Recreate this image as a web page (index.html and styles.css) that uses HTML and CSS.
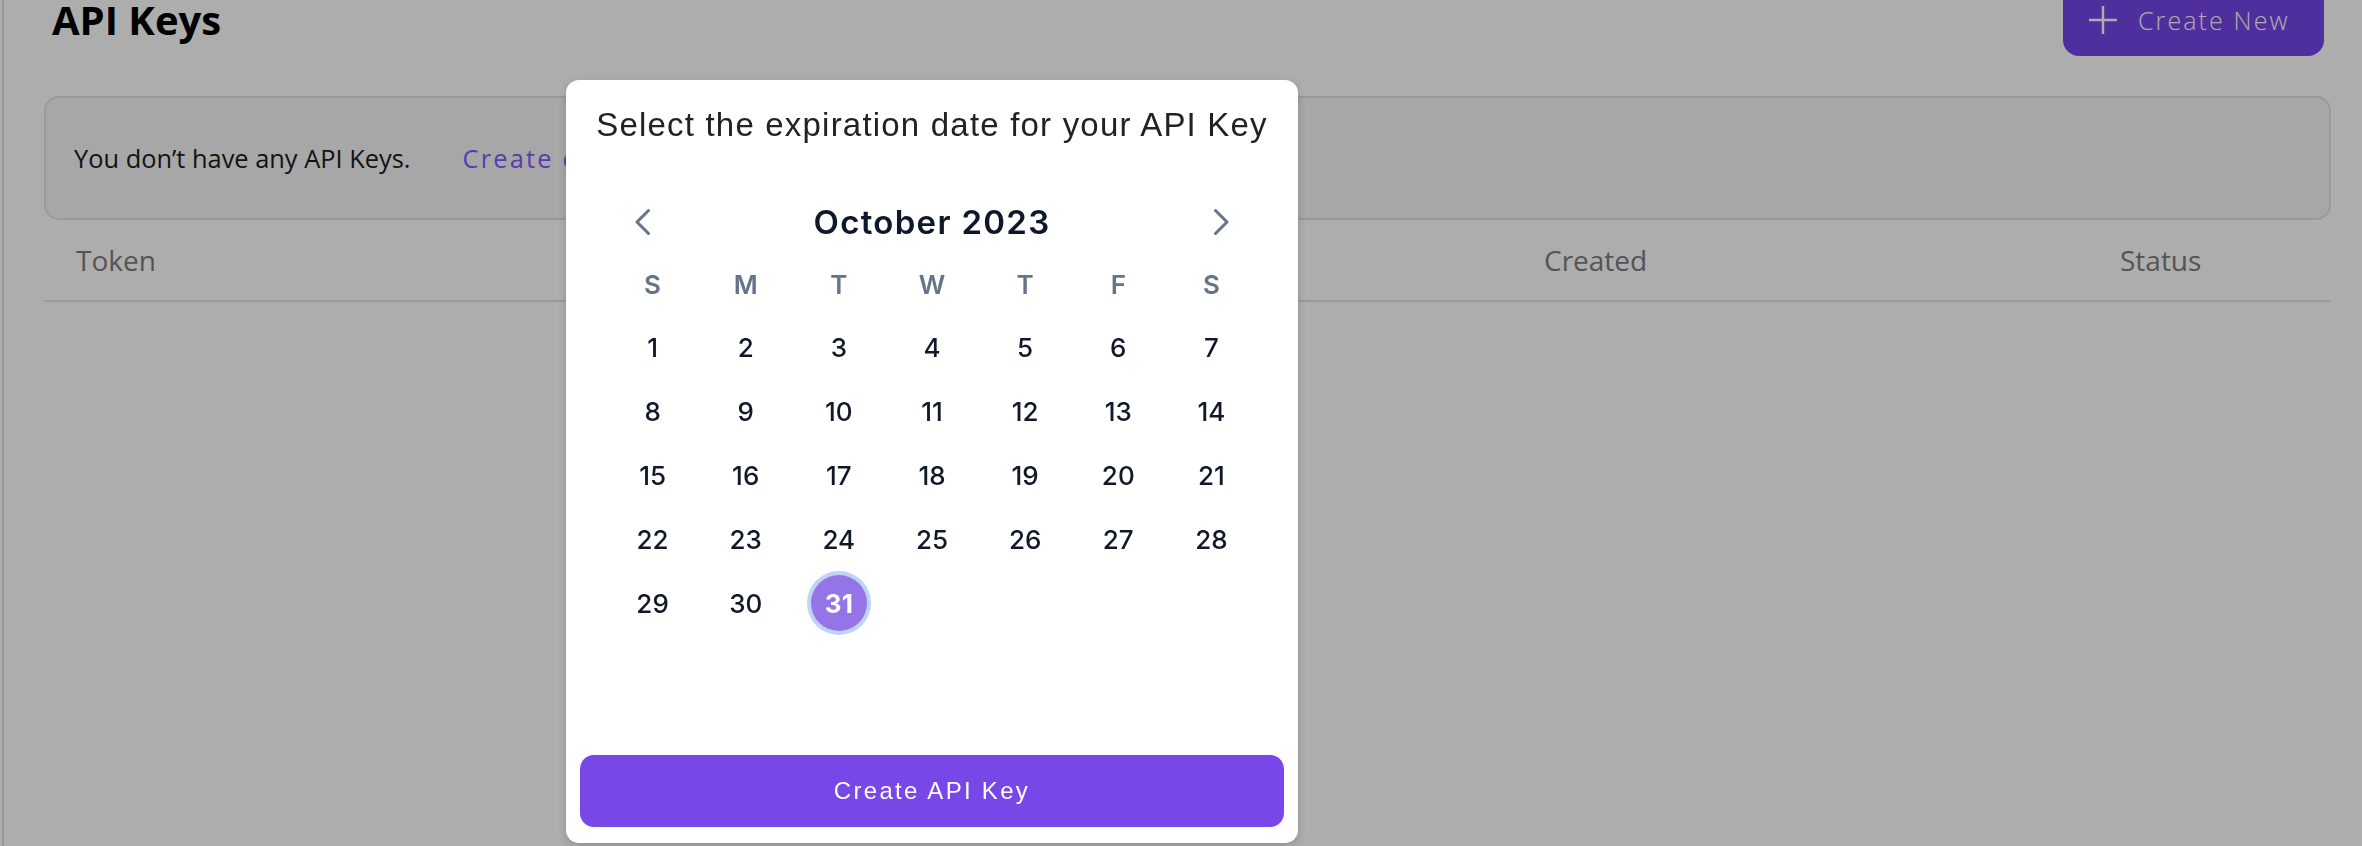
FILE: index.html
```html
<!DOCTYPE html>
<html lang="en">
<head>
<meta charset="utf-8">
<title>API Keys</title>
<link rel="stylesheet" href="styles.css">
</head>
<body>
<div class="app">
  <main class="page">
    <header class="page-header">
      <h1 class="page-title">API Keys</h1>
      <button class="btn-create-new" type="button">
        <svg class="plus-icon" width="30" height="30" viewBox="0 0 30 30" aria-hidden="true">
          <path d="M15 1 V29 M1 15 H29" stroke="currentColor" stroke-width="2.4" fill="none"/>
        </svg>
        <span>Create New</span>
      </button>
    </header>
    <div class="empty-alert">
      <span class="empty-text">You don’t have any API Keys.</span>
      <a class="empty-link" href="#">Create one</a>
    </div>
    <div class="table-head">
      <span>Token</span>
      <span></span>
      <span>Created</span>
      <span>Status</span>
    </div>
  </main>
</div>
<div class="overlay"></div>
<div class="modal" role="dialog" aria-modal="true">
  <h2 class="modal-title">Select the expiration date for your API Key</h2>
  <div class="calendar">
    <div class="cal-header">
      <button class="cal-nav" type="button" aria-label="Previous month">
        <svg width="17" height="28" viewBox="0 0 17 28" aria-hidden="true"><path d="M14.5 2.5 L3 14 L14.5 25.5" stroke="currentColor" stroke-width="3" fill="none" stroke-linecap="round" stroke-linejoin="round"/></svg>
      </button>
      <div class="cal-month">October 2023</div>
      <button class="cal-nav" type="button" aria-label="Next month">
        <svg width="17" height="28" viewBox="0 0 17 28" aria-hidden="true"><path d="M2.5 2.5 L14 14 L2.5 25.5" stroke="currentColor" stroke-width="3" fill="none" stroke-linecap="round" stroke-linejoin="round"/></svg>
      </button>
    </div>
    <div class="cal-weekdays">
      <span>S</span><span>M</span><span>T</span><span>W</span><span>T</span><span>F</span><span>S</span>
    </div>
    <div class="cal-days">
      <span class="cal-day">1</span><span class="cal-day">2</span><span class="cal-day">3</span><span class="cal-day">4</span><span class="cal-day">5</span><span class="cal-day">6</span><span class="cal-day">7</span>
      <span class="cal-day">8</span><span class="cal-day">9</span><span class="cal-day">10</span><span class="cal-day">11</span><span class="cal-day">12</span><span class="cal-day">13</span><span class="cal-day">14</span>
      <span class="cal-day">15</span><span class="cal-day">16</span><span class="cal-day">17</span><span class="cal-day">18</span><span class="cal-day">19</span><span class="cal-day">20</span><span class="cal-day">21</span>
      <span class="cal-day">22</span><span class="cal-day">23</span><span class="cal-day">24</span><span class="cal-day">25</span><span class="cal-day">26</span><span class="cal-day">27</span><span class="cal-day">28</span>
      <span class="cal-day">29</span><span class="cal-day">30</span><span class="cal-day selected">31</span>
    </div>
  </div>
  <button class="btn-primary" type="button">Create API Key</button>
</div>
</body>
</html>
```

FILE: styles.css
```css
html, body {
  margin: 0;
  padding: 0;
}

body {
  width: 2362px;
  height: 846px;
  overflow: hidden;
  background: #ffffff;
  font-family: "Open Sans", "Noto Sans", sans-serif;
}

.app {
  display: flex;
  height: 846px;
}

.page {
  flex: 1;
  margin-left: 2px;
  border-left: 2px solid #e3e3e3;
  padding: 0 31px 0 40px;
}

.page-header {
  display: flex;
  justify-content: space-between;
  align-items: center;
  height: 72px;
  margin-top: -16px;
  padding: 0 7px 0 8px;
}

.page-title {
  margin: 0;
  font-size: 40px;
  line-height: 1;
  font-weight: 700;
  color: #000000;
}

.btn-create-new {
  display: flex;
  align-items: center;
  gap: 20px;
  width: 261px;
  height: 72px;
  padding: 0 0 0 25px;
  border: 0;
  border-radius: 16px;
  background: #7546e8;
  color: #ffffff;
  font-family: "Open Sans", sans-serif;
  font-size: 25px;
  font-weight: 300;
  letter-spacing: 2.1px;
}

.plus-icon {
  flex: none;
}

.empty-alert {
  display: flex;
  align-items: center;
  box-sizing: border-box;
  height: 124px;
  margin-top: 40px;
  padding-left: 28px;
  border: 2px solid #e2e2e2;
  border-radius: 15px;
  background: #f6f6f8;
}

.empty-text {
  font-size: 25.4px;
  color: #1c1c1c;
}

.empty-link {
  margin-left: 52px;
  font-size: 25.4px;
  color: #8658ff;
  letter-spacing: 2.2px;
  text-decoration: none;
}

.table-head {
  display: grid;
  grid-template-columns: 740px 728px 576px 1fr;
  align-items: center;
  height: 80px;
  padding-left: 32px;
  border-bottom: 2px solid #e3e3e3;
  font-size: 28px;
  color: #7d7d7d;
}

.overlay {
  position: fixed;
  inset: 0;
  background: rgba(0, 0, 0, 0.32);
}

.modal {
  position: fixed;
  left: 566px;
  top: 80px;
  width: 732px;
  height: 763px;
  box-sizing: border-box;
  display: flex;
  flex-direction: column;
  padding: 25px 14px 16px;
  background: #ffffff;
  border-radius: 13px;
  box-shadow: 0 3px 10px rgba(0, 0, 0, 0.18);
  font-family: "Liberation Sans", Arial, sans-serif;
}

.modal-title {
  margin: 0;
  text-align: center;
  font-size: 33px;
  line-height: 40px;
  font-weight: 400;
  letter-spacing: 1.2px;
  color: #222222;
}

.calendar {
  margin: 55px 26px 0;
  font-family: Inter, "Noto Sans", sans-serif;
}

.cal-header {
  display: flex;
  align-items: center;
  justify-content: space-between;
  height: 44px;
}

.cal-nav {
  display: flex;
  align-items: center;
  justify-content: center;
  width: 72px;
  height: 44px;
  padding: 0;
  border: 0;
  background: none;
  color: #64748b;
}

.cal-month {
  font-size: 33px;
  line-height: 44px;
  font-weight: 600;
  letter-spacing: 1.3px;
  color: #0f172a;
}

.cal-weekdays {
  display: grid;
  grid-template-columns: repeat(7, 1fr);
  align-items: center;
  justify-items: center;
  height: 62px;
  margin-top: 9px;
  font-size: 26px;
  font-weight: 600;
  color: #64748b;
}

.cal-days {
  display: grid;
  grid-template-columns: repeat(7, 1fr);
  grid-auto-rows: 64px;
  align-items: center;
  justify-items: center;
  font-size: 26px;
  font-weight: 500;
  color: #111827;
}

.cal-day {
  display: flex;
  align-items: center;
  justify-content: center;
  width: 56px;
  height: 56px;
  border-radius: 50%;
}

.cal-day.selected {
  background: #9474e7;
  color: #ffffff;
  font-weight: 700;
  box-shadow: 0 0 0 4px #bfd3f6;
}

.btn-primary {
  margin-top: auto;
  height: 72px;
  border: 0;
  border-radius: 14px;
  background: #7747e8;
  color: #ffffff;
  font-family: "Liberation Sans", Arial, sans-serif;
  font-size: 24px;
  letter-spacing: 2.3px;
}
```
